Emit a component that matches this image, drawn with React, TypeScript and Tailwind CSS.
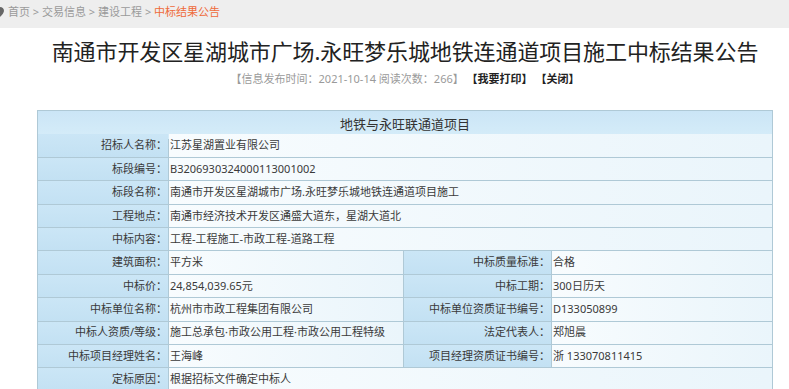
import React from "react";

const font = { fontFamily: '"Noto Sans", "Noto Sans CJK SC", sans-serif' };

type Row =
  | { kind: "full"; label: string; value: string }
  | { kind: "split"; label: string; value: string; label2: string; value2: string };

const rows: Row[] = [
  { kind: "full", label: "招标人名称：", value: "江苏星湖置业有限公司" },
  { kind: "full", label: "标段编号：", value: "B3206930324000113001002" },
  { kind: "full", label: "标段名称：", value: "南通市开发区星湖城市广场.永旺梦乐城地铁连通道项目施工" },
  { kind: "full", label: "工程地点：", value: "南通市经济技术开发区通盛大道东，星湖大道北" },
  { kind: "full", label: "中标内容：", value: "工程-工程施工-市政工程-道路工程" },
  { kind: "split", label: "建筑面积：", value: "平方米", label2: "中标质量标准：", value2: "合格" },
  { kind: "split", label: "中标价：", value: "24,854,039.65元", label2: "中标工期：", value2: "300日历天" },
  { kind: "split", label: "中标单位名称：", value: "杭州市市政工程集团有限公司", label2: "中标单位资质证书编号：", value2: "D133050899" },
  { kind: "split", label: "中标人资质/等级：", value: "施工总承包·市政公用工程·市政公用工程特级", label2: "法定代表人：", value2: "郑旭晨" },
  { kind: "split", label: "中标项目经理姓名：", value: "王海峰", label2: "项目经理资质证书编号：", value2: "浙 133070811415" },
  { kind: "full", label: "定标原因：", value: "根据招标文件确定中标人" },
];

const labelCls =
  "bg-gradient-to-b from-[#cbe6f6] to-[#c3e1f3] text-[#3a3a3a] text-[11px] flex items-center justify-end pr-[1px] whitespace-nowrap";
const valueCls =
  "bg-gradient-to-r from-[#f8fcfe] to-[#eaf5fb] text-[#3a3a3a] text-[11px] flex items-center pl-[1px] whitespace-nowrap overflow-hidden";

export default function App() {
  return (
    <div className="w-[789px] h-[389px] bg-white overflow-hidden" style={font}>
      <div className="h-[28px] bg-[#eeeeee] flex items-center text-[11px] text-[#9a9a9a] relative">
        <svg className="absolute left-[-4px] top-[7px]" width="8" height="10" viewBox="0 0 8 10">
          <path d="M4 0C1.8 0 0 1.7 0 3.8 0 6.5 4 10 4 10s4-3.5 4-6.2C8 1.7 6.2 0 4 0z" fill="#666" />
        </svg>
        <div className="pl-[8px] pb-[4px] flex items-center whitespace-pre">
          <span>首页 &gt; 交易信息 &gt; 建设工程 &gt; </span>
          <span className="text-[#ee6a3a]">中标结果公告</span>
        </div>
      </div>

      <div className="ml-[37px] w-[736px]">
        <div className="h-[42px] pt-[4px] flex items-center justify-center text-[22px] text-[#222] whitespace-nowrap tracking-[-0.1px]">
          南通市开发区星湖城市广场.永旺梦乐城地铁连通道项目施工中标结果公告
        </div>
        <div className="h-[20px] pb-[2px] flex items-center justify-center text-[11px] text-[#9a9a9a] whitespace-pre">
          <span>【信息发布时间：2021-10-14 阅读次数：266】 </span>
          <span className="text-[#222] font-bold">【我要打印】 【关闭】</span>
        </div>

        <div className="mt-[20px] bg-[#afc9d6] p-px grid grid-cols-[130px_234px_147px_1fr] gap-px auto-rows-[22.4px]">
          <div className="col-span-4 h-[28px] bg-gradient-to-b from-[#cbe5f6] to-[#d6edf9] flex items-center justify-center text-[13px] text-[#333]">
            地铁与永旺联通道项目
          </div>
          {rows.map((r, i) =>
            r.kind === "full" ? (
              <React.Fragment key={i}>
                <div className={labelCls}>{r.label}</div>
                <div className={`${valueCls} col-span-3`}>{r.value}</div>
              </React.Fragment>
            ) : (
              <React.Fragment key={i}>
                <div className={labelCls}>{r.label}</div>
                <div className={valueCls}>{r.value}</div>
                <div className={labelCls}>{r.label2}</div>
                <div className={valueCls}>{r.value2}</div>
              </React.Fragment>
            )
          )}
        </div>
      </div>
    </div>
  );
}
